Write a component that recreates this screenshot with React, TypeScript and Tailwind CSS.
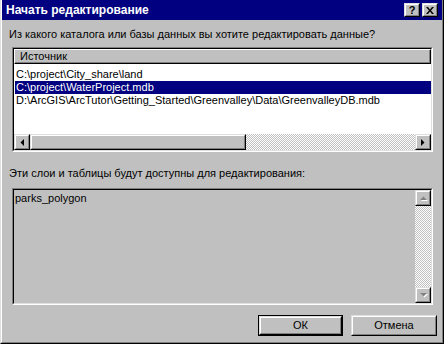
import React from "react";

const font = "font-['Liberation_Sans',Arial,sans-serif]";

const Raised = ({ className = "", children }: { className?: string; children?: React.ReactNode }) => (
  <div
    className={`border border-t-[#dfdfdf] border-l-[#dfdfdf] border-r-black border-b-black bg-[#c0c0c0] ${className}`}
  >
    <div className="w-full h-full border border-t-white border-l-white border-r-[#808080] border-b-[#808080] flex items-center justify-center">
      {children}
    </div>
  </div>
);

const Sunken = ({ className = "", children }: { className?: string; children?: React.ReactNode }) => (
  <div className={`border border-t-[#808080] border-l-[#808080] border-r-white border-b-white ${className}`}>
    <div className="w-full h-full border border-t-black border-l-black border-r-[#dfdfdf] border-b-[#dfdfdf] flex flex-col overflow-hidden">
      {children}
    </div>
  </div>
);

const Arrow = ({ dir, disabled = false }: { dir: "left" | "right" | "up" | "down"; disabled?: boolean }) => {
  const pts: Record<string, string> = {
    left: "4,0 4,7 0.5,3.5",
    right: "0,0 0,7 3.5,3.5",
    up: "0,4 7,4 3.5,0.5",
    down: "0,0 7,0 3.5,3.5",
  };
  const horiz = dir === "left" || dir === "right";
  return (
    <svg width={horiz ? 4 : 7} height={horiz ? 7 : 4} viewBox={horiz ? "0 0 4 7" : "0 0 7 4"} className="overflow-visible">
      {disabled && <polygon points={pts[dir]} fill="#ffffff" transform="translate(1,1)" />}
      <polygon points={pts[dir]} fill={disabled ? "#808080" : "#000000"} />
    </svg>
  );
};

const dither =
  "bg-[repeating-conic-gradient(#c0c0c0_0%_25%,#ffffff_0%_50%)] bg-[length:2px_2px]";

export default function App() {
  return (
    <div className={`w-[444px] h-[344px] bg-[#c0c0c0] text-[11px] leading-[13px] text-black ${font}`}>
      <div className="w-full h-full flex flex-col border-l border-r border-b border-l-[#dfdfdf] border-r-black border-b-black">
        <div className="flex-1 flex flex-col border-l border-r border-b border-l-white border-r-[#808080] border-b-[#808080]">
          {/* title bar */}
          <div className="h-[20px] bg-[#000080] flex items-center pl-[4px] pr-[4px]">
            <span className="text-white font-bold text-[12px] leading-[14px] flex-1">
              Начать редактирование
            </span>
            <Raised className="w-[16px] h-[14px]">
              <span className="font-bold text-[11px] leading-[10px] -mt-[1px]">?</span>
            </Raised>
            <Raised className="w-[16px] h-[14px] ml-[2px]">
              <svg width="8" height="7" viewBox="0 0 8 7">
                <path d="M0 0 L2 0 L4 2.5 L6 0 L8 0 L5 3.5 L8 7 L6 7 L4 4.5 L2 7 L0 7 L3 3.5 Z" fill="#000" />
              </svg>
            </Raised>
          </div>

          <div className="mt-[8px] ml-[7px]">
            Из какого каталога или базы данных вы хотите редактировать данные?
          </div>

          <Sunken className="mt-[6px] ml-[10px] w-[421px] h-[105px]">
            <div className="bg-white flex flex-col h-full">
              <div className="h-[15px] shrink-0 border border-t-white border-l-white border-r-black border-b-black bg-[#c0c0c0]">
                <div className="h-full border-r border-b border-r-[#808080] border-b-[#808080] pl-[5px] leading-[12px]">
                  Источник
                </div>
              </div>
              <div className="pt-[4px] flex flex-col">
                <div className="h-[13px] ml-[1px] pl-[1px]">C:\project\City_share\land</div>
                <div className="h-[13px] ml-[1px] pl-[1px] bg-[#000080] text-white">C:\project\WaterProject.mdb</div>
                <div className="h-[13px] ml-[1px] pl-[1px]">
                  D:\ArcGIS\ArcTutor\Getting_Started\Greenvalley\Data\GreenvalleyDB.mdb
                </div>
              </div>
              <div className="flex-1" />
              <div className="h-[16px] shrink-0 flex">
                <Raised className="w-[16px] h-[16px]">
                  <Arrow dir="left" />
                </Raised>
                <Raised className="w-[216px] h-[16px]" />
                <div className={`flex-1 ${dither}`} />
                <Raised className="w-[16px] h-[16px]">
                  <Arrow dir="right" />
                </Raised>
              </div>
            </div>
          </Sunken>

          <div className="mt-[15px] ml-[7px]">
            Эти слои и таблицы будут доступны для редактирования:
          </div>

          <Sunken className="mt-[8px] ml-[10px] w-[421px] h-[117px]">
            <div className="flex h-full">
              <div className="flex-1 pt-[2px] pl-[1px]">parks_polygon</div>
              <div className={`w-[16px] flex flex-col ${dither}`}>
                <Raised className="w-[16px] h-[16px]">
                  <Arrow dir="up" disabled />
                </Raised>
                <div className="flex-1" />
                <Raised className="w-[16px] h-[16px]">
                  <Arrow dir="down" disabled />
                </Raised>
              </div>
            </div>
          </Sunken>

          <div className="mt-[10px] flex justify-end gap-[8px] mr-[5px]">
            <div className="w-[85px] h-[21px] border border-black">
              <Raised className="w-full h-full">ОК</Raised>
            </div>
            <Raised className="w-[86px] h-[21px]">Отмена</Raised>
          </div>
        </div>
      </div>
    </div>
  );
}
